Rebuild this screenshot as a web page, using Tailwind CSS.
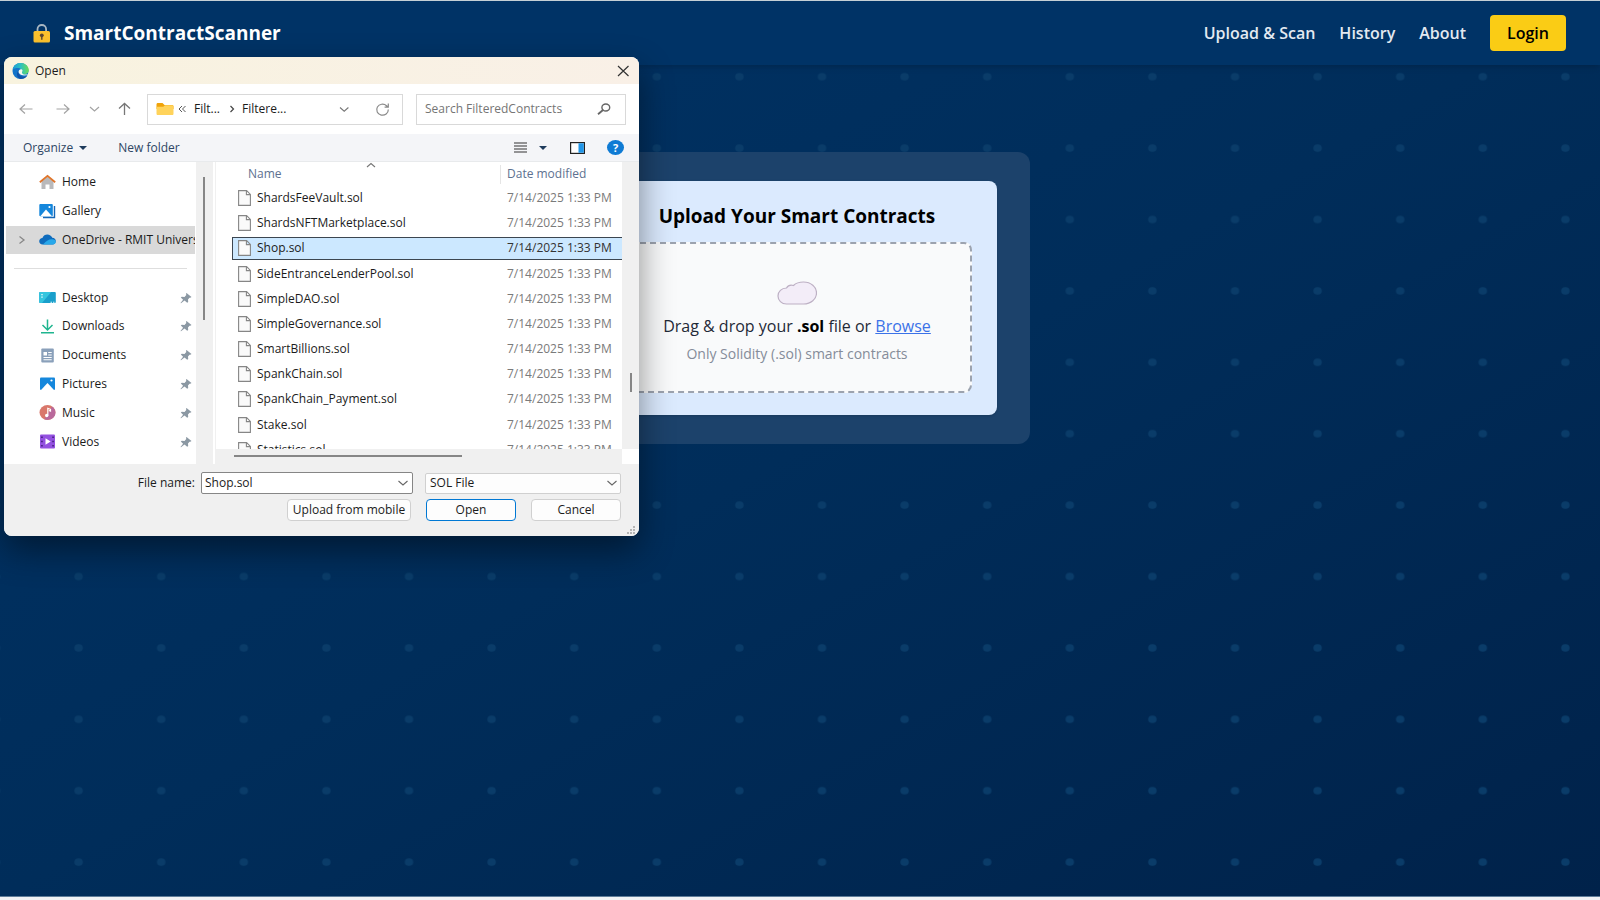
<!DOCTYPE html>
<html lang="en">
<head>
  <meta charset="UTF-8" />
  <meta name="viewport" content="width=device-width, initial-scale=1.0" />
  <title>SmartContractScanner</title>
  <script src="https://cdn.jsdelivr.net/npm/@tailwindcss/browser@4"></script>
</head>
<body class="relative flex flex-col min-h-screen overflow-hidden border-t border-[#c5d0d5] bg-[#f0f2f4] font-['Open_Sans','Noto_Sans',sans-serif]">

  <div class="relative flex flex-col flex-1 mb-[3px] border-b border-[#5f7d99] bg-linear-to-br from-[#003366] via-[#002d5a] to-[#00224a]">

    <!-- dotted backdrop -->
    <svg class="absolute inset-0 w-full h-full" aria-hidden="true">
      <defs>
        <pattern id="dots" x="37.3" y="40" width="82.6" height="71.4" patternUnits="userSpaceOnUse">
          <ellipse cx="41.3" cy="35.7" rx="4.2" ry="3.8" fill="#0a3c69" />
        </pattern>
      </defs>
      <rect width="100%" height="100%" fill="url(#dots)" />
    </svg>

    <header class="relative flex items-center justify-between h-16 pl-8 pr-[34px] bg-[#003366] shadow-md">
      <div class="flex items-center gap-3">
        <svg class="w-5 h-5" viewBox="0 0 20 20" aria-hidden="true">
          <path d="M5.5 9V6.200a4.300 4.200 0 0 1 8.600 0V9" fill="none" stroke="#a9b7c2" stroke-width="1.800" />
          <rect x="1.500" y="8" width="16.500" height="11.500" rx="1.500" fill="#fbc12d" />
          <circle cx="9.800" cy="12.300" r="1.900" fill="#5a4632" />
          <path d="M9.100 13h1.400v3.800H9.100z" fill="#5a4632" />
        </svg>
        <span class="text-[19px] leading-7 font-bold text-white">SmartContractScanner</span>
      </div>
      <nav class="flex items-center gap-6 text-base font-semibold text-[#e3e9f1]">
        <a href="#">Upload &amp; Scan</a>
        <a href="#">History</a>
        <a href="#">About</a>
        <button class="w-[76px] h-9 rounded bg-[#facc15] text-black">Login</button>
      </nav>
    </header>

    <main class="relative flex justify-center pt-[87px] pr-[6px]">
      <section class="w-[466px] px-[33px] py-[29px] rounded-xl bg-[#1c426b]">
        <div class="px-[25px] pt-5 pb-[22px] rounded-lg bg-[#dbeafe] text-center shadow">
          <h1 class="h-[41px] text-[19px] leading-[30px] font-bold text-black whitespace-nowrap">Upload Your Smart Contracts</h1>
          <div class="flex flex-col items-center h-[151px] pt-[37px] border-2 border-dashed border-[#9ca3af] rounded-lg bg-[#f9fafb]">
            <svg class="w-10 h-6" viewBox="0 0 40 24" aria-hidden="true">
              <path d="M9.500 23C4.500 23 1 19.300 1 15c0-4.600 3.500-7.800 8.500-8 1.500-2.600 4.500-3.200 7-2.500C19 2 22.500 1 26.500 1 34 1 39.500 6 39.500 12S34 23 26.500 23z" fill="#f3edf8" stroke="#bdb0c4" stroke-width="1.200" />
            </svg>
            <p class="mt-[9px] text-base leading-6 text-[#1f2937] whitespace-nowrap">Drag &amp; drop your <b class="text-black">.sol</b> file or <a href="#" class="text-[#3b72e8] underline">Browse</a></p>
            <p class="mt-1 text-sm leading-6 text-[#858c99]">Only Solidity (.sol) smart contracts</p>
          </div>
        </div>
      </section>
    </main>
  </div>

  <!-- file picker -->
  <div role="dialog" aria-label="Open" class="absolute left-1 top-14 flex flex-col w-[635px] h-[479px] rounded-lg overflow-hidden bg-white text-xs text-[#1b1b1b] shadow-[0_14px_34px_rgba(0,0,0,0.45)]">

    <div class="flex items-center h-[27px] pl-2 pr-2 bg-linear-to-r from-[#f8f3df] to-[#f9f0e7]">
      <svg class="w-[17px] h-4" viewBox="0 0 17 16" aria-hidden="true">
        <defs>
          <linearGradient id="edgeTop" x1="0" y1="0" x2="1" y2="0"><stop offset="0" stop-color="#1a9bd7" /><stop offset="0.500" stop-color="#2dc0c0" /><stop offset="1" stop-color="#6bdc55" /></linearGradient>
        </defs>
        <circle cx="8.500" cy="8" r="8" fill="#1374c9" />
        <path d="M.6 6.500C1.500 2.500 4.800 0 8.500 0c5 0 8.300 3.500 8.300 7 0 3-2.300 4.400-5 4.400-2 0-2.600-.8-2.100-1.600C10.700 7.500 9 5 6 5 3.500 5 1.500 5.500.6 6.500z" fill="url(#edgeTop)" />
        <path d="M7 6.500c-2 3 .5 7.700 5.500 7.200 1.500-.2 2.600-.8 3.300-1.500C14 15 11 16 8.500 16 5 15.500 3.500 10 7 6.500z" fill="#1152a8" />
        <path d="M8.500 6.200c-2 .6-2.600 2.800-1 4.600 1.900 2 5.900 2.200 8.800.6-2.200.4-5 .2-6-1-.9-1.200.2-2 .2-3 0-.8-1-1.400-2-1.200z" fill="#f4f8ee" />
      </svg>
      <span class="ml-[6px]">Open</span>
      <button aria-label="Close" class="ml-auto flex">
        <svg class="w-4 h-4" viewBox="0 0 16 16"><path d="M3 3l10.500 10M13.500 3L3 13" stroke="#333" stroke-width="1.200" /></svg>
      </button>
    </div>

    <div class="flex items-center h-[50px] pl-[14px] pr-[13px] text-[#8a8a8a]">
      <button aria-label="Back" class="flex"><svg class="w-4 h-4" viewBox="0 0 16 16" fill="none" stroke="#a3a3a3" stroke-width="1.200"><path d="M14.500 8H2M7 3.500L2 8l5 4.500" /></svg></button>
      <button aria-label="Forward" class="flex ml-[21px]"><svg class="w-4 h-4" viewBox="0 0 16 16" fill="none" stroke="#a3a3a3" stroke-width="1.200"><path d="M1.500 8H14M9 3.500L14 8l-5 4.500" /></svg></button>
      <button aria-label="Recent locations" class="flex ml-[15px]"><svg class="w-4 h-4" viewBox="0 0 16 16" fill="none" stroke="#a3a3a3" stroke-width="1.200"><path d="M4 6l4.500 4L13 6" /></svg></button>
      <button aria-label="Up" class="flex ml-[14px]"><svg class="w-4 h-4" viewBox="0 0 16 16" fill="none" stroke="#777" stroke-width="1.300"><path d="M8.500 14V2.500M3 7.500l5.500-5 5.500 5" /></svg></button>

      <div class="flex items-center w-64 h-[31px] ml-[15px] pl-2 pr-3 border border-[#d9d9d9] text-[#1b1b1b]">
        <svg class="w-[18px] h-4" viewBox="0 0 18 16" aria-hidden="true">
          <path d="M.5 3.500C.5 2.500 1 2 2 2h4.500l2 2H16c1 0 1.500.5 1.500 1.500V8H.5z" fill="#f0a30a" />
          <path d="M.5 5.800h6.800L9 4.300h7c1 0 1.500.5 1.500 1.500v6.700c0 1-.5 1.500-1.500 1.500H2c-1 0-1.500-.5-1.500-1.500z" fill="#ffd35b" />
        </svg>
        <svg class="w-2 h-2 ml-1" viewBox="0 0 8 8" fill="none" stroke="#444" stroke-width="0.900"><path d="M4 1L1 4l3 3M7.500 1l-3 3 3 3" /></svg>
        <span class="ml-2">Filt...</span>
        <svg class="w-2 h-2 ml-2" viewBox="0 0 8 8" fill="none" stroke="#444" stroke-width="1.200"><path d="M2.500 1l3 3-3 3" /></svg>
        <span class="ml-[6px]">Filtere...</span>
        <button aria-label="Previous locations" class="flex ml-auto"><svg class="w-3 h-3" viewBox="0 0 12 12" fill="none" stroke="#777" stroke-width="1.100"><path d="M2 4.500l4.200 3.700 4.200-3.700" /></svg></button>
        <button aria-label="Refresh" class="flex ml-[25px]"><svg class="w-[15px] h-[15px]" viewBox="0 0 15 15" fill="none" stroke="#8a8a8a" stroke-width="1.200"><path d="M13.300 7.500A5.800 5.500 0 1 1 11.500 3.700L13 5M13.300 1.500V5.200H9.600" /></svg></button>
      </div>

      <div class="flex flex-1 items-center h-[31px] ml-[13px] pl-2 pr-[14px] border border-[#d9d9d9]">
        <input type="text" aria-label="Search" placeholder="Search FilteredContracts" class="flex-1 min-w-0 outline-none placeholder:text-[#757575]" />
        <svg class="w-[14px] h-3" viewBox="0 0 14 12" fill="none" stroke="#666" aria-hidden="true"><ellipse cx="8.800" cy="4.500" rx="3.900" ry="3.500" stroke-width="1.400" /><path d="M6 7L1 11.300" stroke-width="1.800" /></svg>
      </div>
    </div>

    <div class="flex items-center h-7 pl-[19px] pr-[15px] border-b border-[#e8eaec] bg-[#f4f5f8] text-[#2e4664]">
      <button class="flex items-center gap-[6px]">Organize
        <svg class="w-2 h-1" viewBox="0 0 8 4" fill="#1f3b5c"><path d="M0 0h8L4 4z" /></svg>
      </button>
      <button class="ml-[31px]">New folder</button>
      <button aria-label="Change view" class="flex items-center gap-3 ml-auto">
        <svg class="w-[13px] h-[11px]" viewBox="0 0 13 11" stroke="#333"><path d="M0 1h13M0 4h13M0 7h13M0 10h13" stroke-width="1.100" /></svg>
        <svg class="w-2 h-1" viewBox="0 0 8 4" fill="#1f3b5c"><path d="M0 0h8L4 4z" /></svg>
      </button>
      <button aria-label="Preview pane" class="flex ml-[23px]">
        <svg class="w-[15px] h-3" viewBox="0 0 15 12"><rect x=".6" y=".6" width="13.800" height="10.800" fill="#fff" stroke="#222" stroke-width="1.200" /><path d="M8.500 1.200h5.300v9.600H8.500z" fill="#2196e8" /></svg>
      </button>
      <button aria-label="Help" class="flex items-center justify-center w-[17px] h-[15px] ml-[22px] rounded-[50%] bg-[#0f7bd4] text-white text-[11px] leading-3 font-bold">?</button>
    </div>

    <div class="flex h-[302px]">
      <!-- folders -->
      <ul id="places" class="grid grid-rows-10 w-[189px] h-[288px] mt-[6px] ml-[2px]"></ul>
      <div class="w-[17px] ml-px pl-[7px] pt-[15px] bg-[#f0f0f0]">
        <div class="w-[2px] h-[143px] bg-[#868686]"></div>
      </div>

      <!-- files -->
      <div class="flex flex-col flex-1 ml-[2px] border-l border-[#f0f0f0]">
        <div class="flex h-[287px]">
          <div class="relative flex-1 pl-4 overflow-hidden">
            <svg class="absolute left-[150px] top-0 w-[10px] h-[6px]" viewBox="0 0 10 6" fill="none" stroke="#777" stroke-width="1.100"><path d="M1 5l4-3.500L9 5" /></svg>
            <table class="w-full h-[302px] table-fixed border-separate border-spacing-x-0 border-spacing-y-[3px] text-left">
              <thead>
                <tr class="text-[#5d7190]">
                  <th class="h-[19px] p-0 pl-4 pb-[2px] font-normal leading-4">Name</th>
                  <th class="w-[122px] p-0 pl-[6px] pb-[2px] border-l border-[#e5e5e5] font-normal leading-4">Date modified</th>
                </tr>
              </thead>
              <tbody id="files"></tbody>
            </table>
          </div>
          <div class="w-[17px] pl-2 pt-[211px] bg-[#f0f0f0]">
            <div class="w-[2px] h-[19px] bg-[#868686]"></div>
          </div>
        </div>
        <div class="flex-1 mr-[17px] pl-[18px] pt-[6px] bg-[#f0f0f0]">
          <div class="w-[228px] h-[2px] bg-[#868686]"></div>
        </div>
      </div>
    </div>

    <div class="relative flex flex-1 flex-col gap-[5px] pt-2 pr-[18px] bg-[#f0f0f0]">
      <div class="flex items-center justify-end">
        <label for="filename" class="mr-[6px]">File name:</label>
        <div class="flex items-center w-[212px] h-[22px] px-[3px] border border-[#868686] rounded-xs bg-white">
          <input id="filename" type="text" value="Shop.sol" class="flex-1 min-w-0 outline-none" />
          <svg class="w-3 h-3" viewBox="0 0 12 12" fill="none" stroke="#666" stroke-width="1.100"><path d="M1.500 4l4.500 4 4.500-4" /></svg>
        </div>
        <div class="relative w-[196px] h-[21px] ml-3">
          <select aria-label="File type" class="w-full h-full pl-1 appearance-none border border-[#d0d0d0] rounded-xs bg-[#fdfdfd] leading-4">
            <option>SOL File</option>
          </select>
          <svg class="absolute right-[3px] top-1 w-3 h-3 pointer-events-none" viewBox="0 0 12 12" fill="none" stroke="#666" stroke-width="1.100"><path d="M1.500 4l4.500 4 4.500-4" /></svg>
        </div>
      </div>
      <div class="flex justify-end gap-[15px]">
        <button class="w-[124px] h-[22px] border border-[#d0d0d0] rounded bg-[#fdfdfd] leading-4 whitespace-nowrap">Upload from mobile</button>
        <button class="w-[90px] h-[22px] border border-[#0078d4] rounded bg-[#fdfdfd] leading-4">Open</button>
        <button class="w-[90px] h-[22px] border border-[#d0d0d0] rounded bg-[#fdfdfd] leading-4">Cancel</button>
      </div>
      <svg class="absolute right-1 bottom-[2px] w-2 h-2" viewBox="0 0 8 8" fill="#b5b5b5" aria-hidden="true"><path d="M6 0h2v2H6zM3 3h2v2H3zM6 3h2v2H6zM0 6h2v2H0zM3 6h2v2H3zM6 6h2v2H6z" /></svg>
    </div>
  </div>

  <script>
    const icons = {
      home: '<path d="M2.500 7.500L8.500 2.500l6 5V15h-4v-4.500h-4V15h-4z" fill="#b9b9bb"/><path d="M.8 8.200L8.500 1.800l7.700 6.400" fill="none" stroke="#e0752a" stroke-width="1.800"/>',
      gallery: '<path d="M15.500 3v11.500H4" fill="none" stroke="#1667b7" stroke-width="1.400"/><rect x=".3" y="1" width="13.500" height="12.300" rx="1" fill="#1587dc"/><path d="M1.500 13l5.500-6.500L12.800 13z" fill="#fff"/><circle cx="10.500" cy="4" r="1.100" fill="#fff"/>',
      onedrive: '<path d="M3.500 13.500C1.500 13.500.2 12 .2 10.200.2 8.400 1.600 7 3.400 6.900 4.300 4.700 6.200 3.500 8.300 3.500c2.300 0 4.200 1.300 5 3.300 2 .1 3.500 1.400 3.500 3.300s-1.300 3.400-3.200 3.400z" fill="#0f6cbd"/><path d="M4 13.500c4-4 6-5.500 9.300-5.200 2 .1 3.500 1 3.500 2.500 0 1.700-1.300 2.700-3.200 2.700z" fill="#28a8ea"/>',
      desktop: '<rect x=".2" y="3" width="16.600" height="11" rx="1" fill="#1a9fcb"/><path d="M.2 4c0-.6.400-1 1-1h11L3 14H1.200c-.6 0-1-.4-1-1z" fill="#35c5de"/><path d="M2.300 5h1.400v1.300H2.300zM2.300 7.500h1.400v1.300H2.300zM11.500 12.800H13v1h-1.500zM14 12.800h1.500v1H14z" fill="#e8fbff"/>',
      downloads: '<path d="M8.500 1.500v10M3.500 7l5 5 5-5M2 14.800h13" fill="none" stroke="#1fb58f" stroke-width="1.500"/>',
      documents: '<rect x="2.300" y="1.500" width="12.500" height="14" rx="1" fill="#8aa0ba"/><path d="M4.500 5h3.500v3.500H4.500zM9.200 5h3.500v1H9.200zM9.200 7.400h3.500v1H9.200zM4.500 10h8.200v1H4.500zM4.500 12.200h8.200v1H4.500z" fill="#fff"/>',
      pictures: '<rect x="1" y="2.500" width="15" height="12.500" rx="1" fill="#1587dc"/><path d="M2 15l6.500-7 6.500 7z" fill="#fff"/><circle cx="12.500" cy="5.500" r="1.100" fill="#fff"/>',
      music: '<ellipse cx="8.500" cy="8.500" rx="8" ry="7.500" fill="#d9776b"/><path d="M13 2.600C17.500 5.500 17.300 12 13.500 14.300 11 16 8 16 5.500 15.200z" fill="#b9699b"/><path d="M8.800 11.500V4.300l2.700 1v1.800l-1.600-.6" fill="none" stroke="#fff" stroke-width="1.200"/><circle cx="7.700" cy="11.500" r="1.700" fill="#fff"/>',
      videos: '<rect x="1" y="1.500" width="15" height="14" rx="1" fill="#9351e0"/><path d="M2.200 3.500h1.500v1.500H2.200zM2.200 7.700h1.500v1.500H2.200zM2.200 12h1.500v1.500H2.200zM13.300 3.500h1.500v1.500h-1.500zM13.300 7.700h1.500v1.500h-1.500zM13.300 12h1.500v1.500h-1.500z" fill="#3f1b77"/><path d="M6.500 5.300l5.200 3.200-5.200 3.200z" fill="#fff"/>'
    };

    const places = [
      { icon: "home", name: "Home" },
      { icon: "gallery", name: "Gallery" },
      { icon: "onedrive", name: "OneDrive - RMIT University", selected: true },
      null,
      { icon: "desktop", name: "Desktop", pinned: true },
      { icon: "downloads", name: "Downloads", pinned: true },
      { icon: "documents", name: "Documents", pinned: true },
      { icon: "pictures", name: "Pictures", pinned: true },
      { icon: "music", name: "Music", pinned: true },
      { icon: "videos", name: "Videos", pinned: true }
    ];

    const files = [
      "ShardsFeeVault.sol", "ShardsNFTMarketplace.sol", "Shop.sol", "SideEntranceLenderPool.sol",
      "SimpleDAO.sol", "SimpleGovernance.sol", "SmartBillions.sol", "SpankChain.sol",
      "SpankChain_Payment.sol", "Stake.sol", "Statistics.sol"
    ];

    const pin = '<svg class="w-3 h-3 ml-auto mr-[3px] shrink-0" viewBox="0 0 12 12" fill="#8b98a3"><path d="M6.500 1l5 4-1.200.8-.8-.1-1.500 1.800.2 2.500-1 .7-2.700-2.300L1 11.300l-.5-.4 2.600-3.200L.8 5.500l1-.8 2.700.2L6.300 3 6 1.800z"/></svg>';
    const expand = '<svg class="w-2 h-3 shrink-0" viewBox="0 0 8 12" fill="none" stroke="#888" stroke-width="1.300"><path d="M1.500 2.500L6 6 1.500 9.500"/></svg>';

    document.getElementById("places").innerHTML = places.map(p => {
      if (!p) return '<li class="flex items-center px-2"><hr class="w-full border-[#dedede]" /></li>';
      return `<li class="flex items-center overflow-hidden whitespace-nowrap ${p.selected ? "bg-[#d9d9d9]" : ""}">
        <span class="flex w-[33px] pl-3 shrink-0">${p.selected ? expand : ""}</span>
        <svg class="w-[17px] h-[17px] shrink-0" viewBox="0 0 17 17" aria-hidden="true">${icons[p.icon]}</svg>
        <span class="ml-[6px]">${p.name}</span>${p.pinned ? pin : ""}
      </li>`;
    }).join("");

    document.getElementById("files").innerHTML = files.map(name => {
      const on = name === "Shop.sol";
      return `<tr class="${on ? "bg-[#cce8ff]" : "text-[#1b1b1b]"}">
        <td class="h-[22px] p-0 pl-[5px] border-y border-l ${on ? "border-[#3c4650]" : "border-transparent"} leading-4">
          <span class="flex items-center gap-[6px]">
            <svg class="w-[13px] h-4" viewBox="0 0 13 16" aria-hidden="true"><path d="M.6 .6h8l3.800 3.800v11H.6zM8.400.6v4h4" fill="#fafafa" stroke="#868686" stroke-width="1.100"/></svg>${name}
          </span>
        </td>
        <td class="h-[22px] p-0 pl-[7px] border-y ${on ? "border-[#3c4650] text-[#333]" : "border-transparent text-[#7a7a7a]"} leading-4 whitespace-nowrap">7/14/2025 1:33 PM</td>
      </tr>`;
    }).join("");
  </script>
</body>
</html>
